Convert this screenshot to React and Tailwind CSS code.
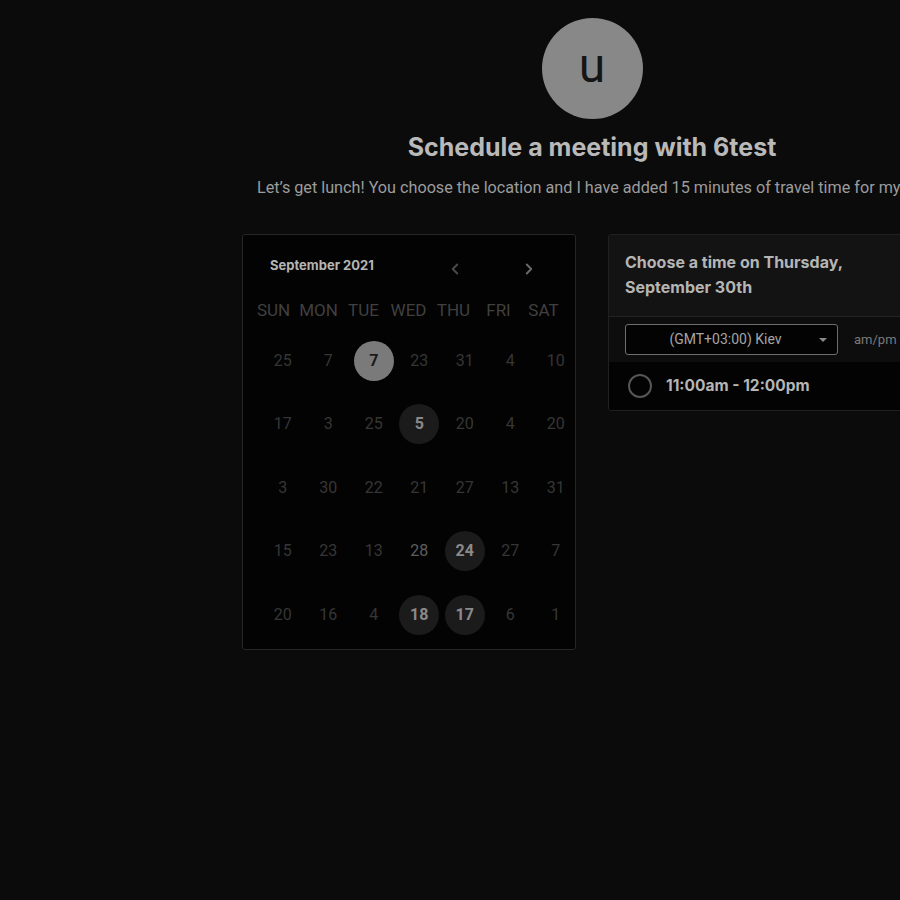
import { ChevronLeft, ChevronRight } from 'lucide-react'

const WEEKDAYS = ['SUN', 'MON', 'TUE', 'WED', 'THU', 'FRI', 'SAT']

// kind: '' plain, 'sel' selected, 'av' available, 'hi' brighter text
const ROWS = [
  [['25'], ['7'], ['7', 'sel'], ['23'], ['31'], ['4'], ['10']],
  [['17'], ['3'], ['25'], ['5', 'av'], ['20'], ['4'], ['20']],
  [['3'], ['30'], ['22'], ['21'], ['27'], ['13'], ['31']],
  [['15'], ['23'], ['13'], ['28', 'hi'], ['24', 'av'], ['27'], ['7']],
  [['20'], ['16'], ['4'], ['18', 'av'], ['17', 'av'], ['6'], ['1']],
]

const DAY_STYLE = {
  sel: 'bg-[#7a7a7a] text-[#1a1a1a] font-bold',
  av: 'bg-[#1b1b1b] text-[#8a8a8a] font-bold',
  hi: 'text-[#5e5e5e]',
  '': 'text-[#363636]',
}

const inter = 'font-["Inter","Liberation_Sans",sans-serif]'
const roboto = 'font-["Roboto","Liberation_Sans",sans-serif]'

export default function App() {
  return (
    <div className="w-[900px] h-[900px] overflow-hidden bg-[#0b0b0b]">
      <div className="ml-[242px] w-[700px] flex flex-col items-center">
        <div className={`mt-[18px] w-[101px] h-[101px] rounded-full bg-[#888888] flex items-center justify-center text-[48px] leading-none text-[#151515] pb-[6px] ${roboto}`}>
          u
        </div>
        <h1 className={`mt-3 text-[25px] leading-8 font-bold text-[#b9b9b9] ${inter}`}>
          Schedule a meeting with 6test
        </h1>
        <p className={`mt-[15px] text-[16.2px] leading-5 text-[#9c9c9c] whitespace-nowrap ${roboto}`}>
          Let’s get lunch! You choose the location and I have added 15 minutes of travel time for myself
        </p>

        <div className="mt-9 flex gap-8 self-stretch items-start">
          <Calendar />
          <TimePanel />
        </div>
      </div>
    </div>
  )
}

function Calendar() {
  return (
    <div className="w-[334px] h-[416px] shrink-0 rounded-[3px] border border-[#262626] bg-[#030303]">
      <div className="flex items-center pl-[27px] pt-[16px] h-[46px]">
        <span className={`text-[13px] font-bold text-[#b5b5b5] ${inter}`}>September 2021</span>
        <ChevronLeft size={18} strokeWidth={2.5} className="ml-[72px] mt-[6px] text-[#4a4a4a]" />
        <ChevronRight size={18} strokeWidth={2.5} className="ml-[56px] mt-[6px] text-[#6a6a6a]" />
      </div>
      <div className={`mt-[19px] ml-[8px] grid grid-cols-[repeat(7,45px)] text-[17px] leading-5 text-[#404040] ${roboto}`}>
        {WEEKDAYS.map(d => <span key={d} className="text-center">{d}</span>)}
      </div>
      <div className="mt-[9px] pl-[17px]">
        {ROWS.map((row, i) => (
          <div key={i} className="grid grid-cols-[repeat(7,45.5px)] h-[63.5px]">
            {row.map(([n, kind = ''], j) => (
              <div key={j} className="flex items-center justify-center">
                <span className={`w-10 h-10 rounded-full flex items-center justify-center text-[16px] ${roboto} ${DAY_STYLE[kind]}`}>
                  {n}
                </span>
              </div>
            ))}
          </div>
        ))}
      </div>
    </div>
  )
}

function TimePanel() {
  return (
    <div className="w-[334px] shrink-0 rounded-[3px] border border-[#202020] overflow-hidden">
      <div className={`bg-[#131313] px-4 pt-[15px] pb-[16px] text-[16px] leading-[25px] font-bold text-[#b5b5b5] ${inter}`}>
        Choose a time on Thursday,<br />September 30th
      </div>
      <div className="h-[46px] bg-[#0d0d0d] border-t border-[#232323] flex items-center pl-4">
        <div className="w-[213px] h-[31px] rounded-[3px] border border-[#6e6e6e] bg-[#030303] flex items-center">
          <span className={`flex-1 text-center pl-[6px] text-[14px] text-[#a5a5a5] ${roboto}`}>(GMT+03:00) Kiev</span>
          <span className="mr-[10px] w-0 h-0 border-l-4 border-r-4 border-t-4 border-l-transparent border-r-transparent border-t-[#8a8a8a]" />
        </div>
        <span className={`ml-4 text-[13px] text-[#7a7a7a] ${roboto}`}>am/pm</span>
      </div>
      <div className="h-[48px] bg-[#030303] flex items-center pl-[19px]">
        <span className="w-6 h-6 rounded-full border-2 border-[#565656]" />
        <span className={`ml-[14px] text-[15.5px] font-bold text-[#b5b5b5] ${inter}`}>11:00am - 12:00pm</span>
      </div>
    </div>
  )
}
